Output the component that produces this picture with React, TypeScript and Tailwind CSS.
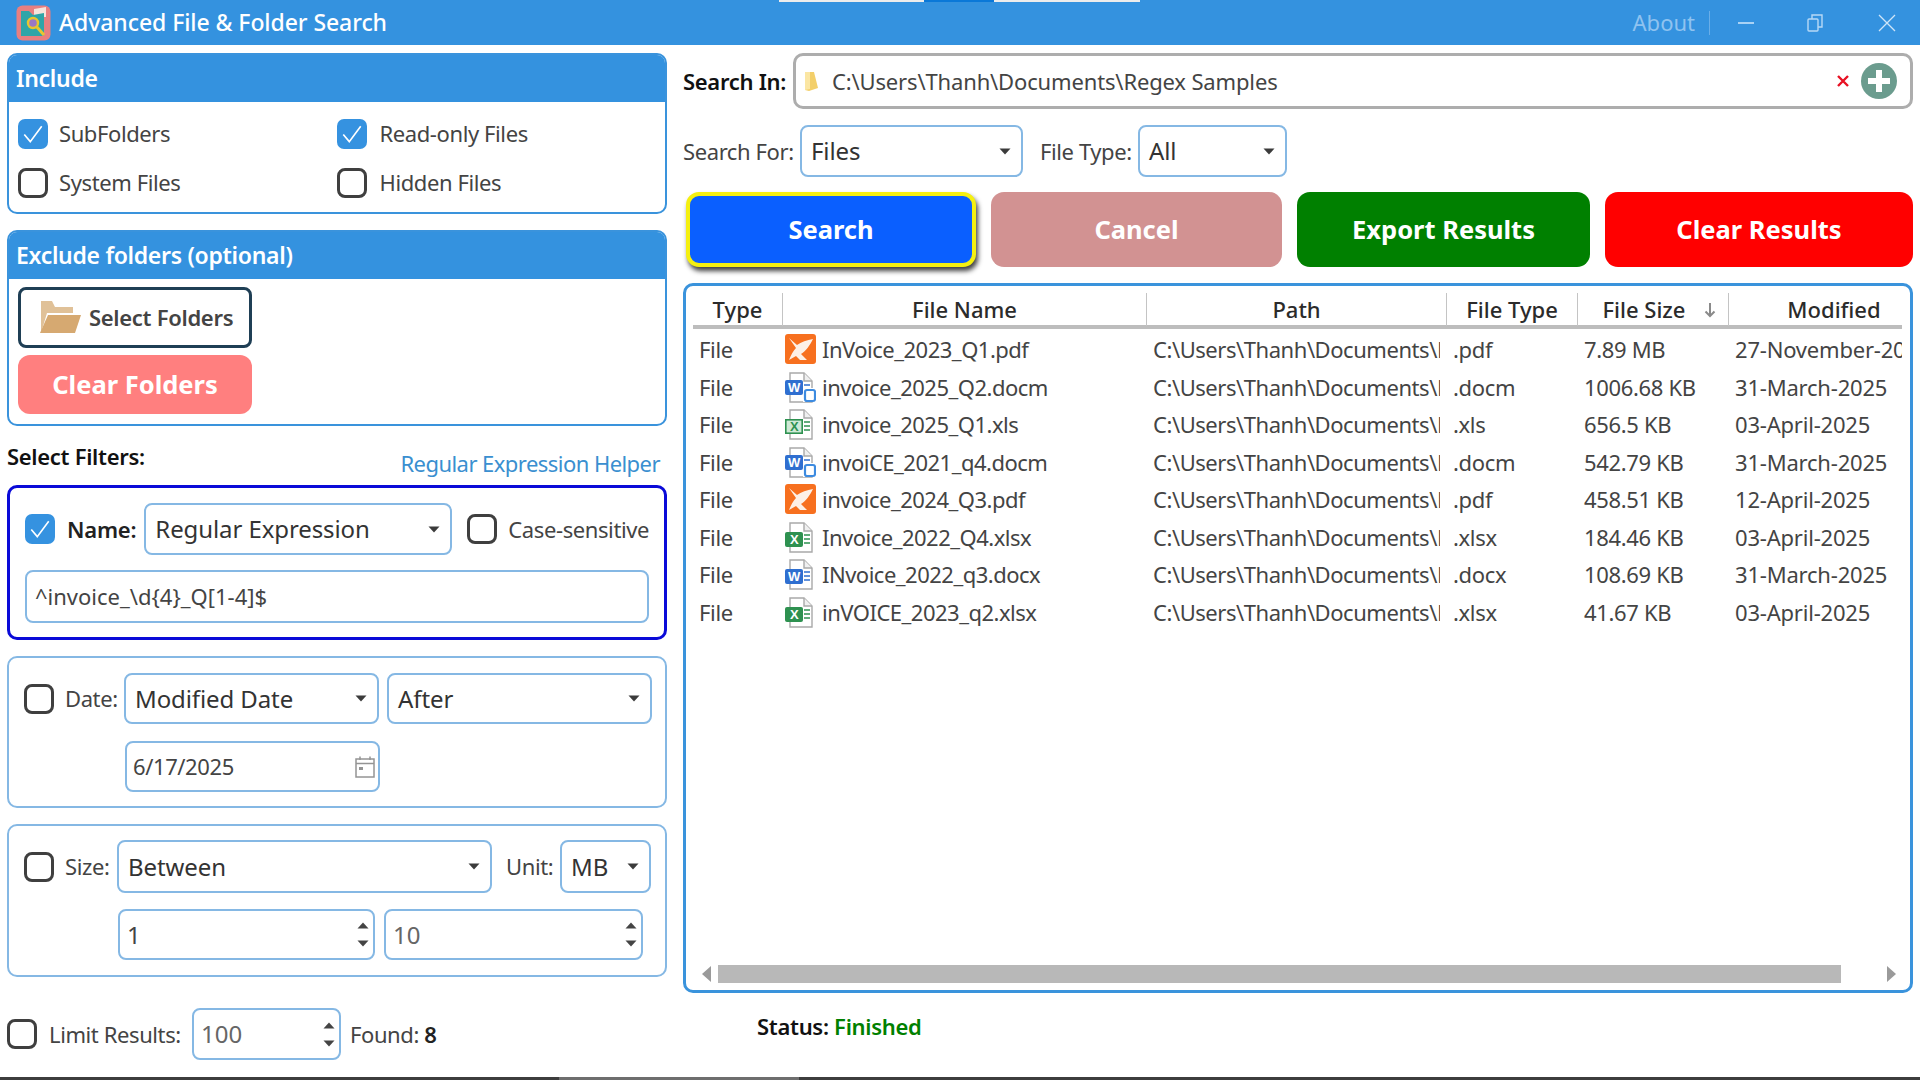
import React from "react";

const FONT = "font-['Noto_Sans','Open_Sans',sans-serif]";

function Check({ checked, className = "" }: { checked?: boolean; className?: string }) {
  if (checked) {
    return (
      <span className={`flex h-[30px] w-[30px] shrink-0 items-center justify-center rounded-[7px] bg-[#3592e0] ${className}`}>
        <svg width="24" height="24" viewBox="0 0 22 22" fill="none">
          <path d="M3 11.5 L8.5 18 L19 4" stroke="#fff" strokeWidth="1.5" />
        </svg>
      </span>
    );
  }
  return <span className={`block h-[30px] w-[30px] shrink-0 rounded-[8px] border-[3px] border-[#3f3f3f] bg-white ${className}`} />;
}

function Caret() {
  return (
    <svg width="12" height="7" viewBox="0 0 12 7" className="shrink-0">
      <path d="M0.5 0.5 H11.5 L6 6.5 Z" fill="#3b3b3b" />
    </svg>
  );
}

function Select({ value, className = "" }: { value: string; className?: string }) {
  return (
    <div className={`flex items-center justify-between rounded-[8px] border-2 border-[#85b8e4] bg-white pl-[9px] pr-[10px] text-[24px] tracking-[-0.1px] text-[#333] ${className}`}>
      <span className="whitespace-nowrap">{value}</span>
      <Caret />
    </div>
  );
}

function Spin({ value, className = "", dim }: { value: string; className?: string; dim?: boolean }) {
  return (
    <div className={`flex items-center justify-between rounded-[8px] border-2 border-[#85b8e4] bg-white pl-[7px] pr-[4px] text-[24px] ${dim ? "text-[#666]" : "text-[#444]"} ${className}`}>
      <span>{value}</span>
      <span className="flex flex-col gap-[11px]">
        <svg width="12" height="7" viewBox="0 0 12 7"><path d="M0.5 6.5 H11.5 L6 0.5 Z" fill="#444" /></svg>
        <svg width="12" height="7" viewBox="0 0 12 7"><path d="M0.5 0.5 H11.5 L6 6.5 Z" fill="#444" /></svg>
      </span>
    </div>
  );
}

function Logo() {
  return (
    <svg width="35" height="36" viewBox="0 0 35 36" className="shrink-0">
      <rect x="0.5" y="0.5" width="34" height="35" rx="6" fill="#e87f80" />
      <path d="M18 4 L30 2 V12 H18 Z" fill="#f6e4dc" />
      <path d="M5 6 H13 L17 10 L28 8 V29 Q28 31 26 31 H5 Z" fill="#2fa5a8" />
      <path d="M20 21 L28 30" stroke="#e9c62f" strokeWidth="3" />
      <circle cx="17" cy="18" r="5" fill="#9a78c6" stroke="#e9c62f" strokeWidth="2.4" />
    </svg>
  );
}

function FolderOpen() {
  return (
    <svg width="44" height="34" viewBox="0 0 44 34" className="shrink-0">
      <path d="M4 0 H15 L18 6 H36 V12 H10 L4 32 Z" fill="#e0c198" />
      <path d="M11 14 H44 L38 32 H3 Z" fill="#d6a971" />
    </svg>
  );
}

function FileIcon({ kind }: { kind: string }) {
  if (kind === "pdf") {
    return (
      <svg width="31" height="31" viewBox="0 0 31 31">
        <rect width="31" height="30" rx="3" fill="#f7701f" />
        <path d="M4 4 L12 11 C16 8 22 6 28 5 C25 11 21 17 16 20 L22 26 L15 26 L11 22 L4 26 C6 21 8 17 11 14 Z" fill="#fdf0e6" />
      </svg>
    );
  }
  const isWord = kind.startsWith("doc");
  const color = isWord ? "#2f6fd0" : "#2e9150";
  const letter = isWord ? "W" : "X";
  const macro = kind === "docm";
  return (
    <svg width="31" height="31" viewBox="0 0 31 31">
      <path d="M5 1 H19 L27 9 V30 H5 Z" fill="#fff" stroke="#a9a9a9" strokeWidth="1.4" />
      <path d="M19 1 V9 H27" fill="#f0f0f0" stroke="#a9a9a9" strokeWidth="1.4" />
      <g stroke={color} strokeWidth="1.6">
        <path d="M19 13 H25 M19 17 H25 M19 21 H25" />
      </g>
      {kind === "xls" ? (
        <rect x="0.8" y="10.8" width="16.4" height="13.4" fill="#cfe9d6" stroke={color} strokeWidth="1.6" />
      ) : (
        <rect y={macro ? 8 : 10} width="18" height="15" rx="2" fill={color} />
      )}
      <text x="9" y={macro ? 20 : 22} textAnchor="middle" fontSize="13" fontWeight="700" fontFamily="Liberation Sans" fill={kind === "xls" ? color : "#fff"}>{letter}</text>
      {macro && (
        <g>
          <rect x="18" y="16" width="13" height="14" fill="#fff" />
          <rect x="20" y="18" width="10" height="11" rx="2" fill="#fff" stroke="#3d8be0" strokeWidth="2.2" />
        </g>
      )}
    </svg>
  );
}

const rows = [
  ["pdf", "InVoice_2023_Q1.pdf", ".pdf", "7.89 MB", "27-November-2025"],
  ["docm", "invoice_2025_Q2.docm", ".docm", "1006.68 KB", "31-March-2025"],
  ["xls", "invoice_2025_Q1.xls", ".xls", "656.5 KB", "03-April-2025"],
  ["docm", "invoiCE_2021_q4.docm", ".docm", "542.79 KB", "31-March-2025"],
  ["pdf", "invoice_2024_Q3.pdf", ".pdf", "458.51 KB", "12-April-2025"],
  ["xlsx", "Invoice_2022_Q4.xlsx", ".xlsx", "184.46 KB", "03-April-2025"],
  ["docx", "INvoice_2022_q3.docx", ".docx", "108.69 KB", "31-March-2025"],
  ["xlsx", "inVOICE_2023_q2.xlsx", ".xlsx", "41.67 KB", "03-April-2025"],
];

const headCell = "flex items-center justify-center border-r border-[#c4c4c4] text-[22px] font-medium text-[#2b2b2b]";
const bodyCell = "overflow-hidden whitespace-nowrap pl-[6px]";
const label = "text-[22px] tracking-[-0.4px] text-[#444] whitespace-nowrap";
const actionBtn = "flex items-center justify-center rounded-[13px] text-[25.5px] font-bold text-white";

export default function App() {
  return (
    <div className={`relative flex h-[1080px] w-[1920px] flex-col overflow-hidden bg-white ${FONT}`}>
      {/* Title bar */}
      <div className="relative flex h-[45px] shrink-0 items-center bg-[#3492df] pl-[16px] pr-[24px]">
        <div className="absolute left-[779px] top-0 flex h-[2px]">
          <span className="w-[145px] bg-[#ececec]" />
          <span className="w-[70px] bg-[#0a78d8]" />
          <span className="w-[146px] bg-[#ececec]" />
        </div>
        <Logo />
        <span className="ml-[8px] text-[23px] font-medium tracking-[-0.07px] text-white">Advanced File &amp; Folder Search</span>
        <span className="ml-auto text-[22px] text-[#8fc3f0]">About</span>
        <span className="ml-[14px] h-[24px] w-px bg-[#6aaee8]" />
        <svg width="16" height="2" className="ml-[28px]"><rect width="16" height="2" fill="#a9d2f5" /></svg>
        <svg width="16" height="18" viewBox="0 0 16 18" fill="none" stroke="#b7d9f6" strokeWidth="1.4" className="ml-[53px]">
          <rect x="1" y="5" width="10" height="12" rx="1" />
          <path d="M5 5 V1 H15 V13 H11" />
        </svg>
        <svg width="18" height="18" viewBox="0 0 18 18" stroke="#cfe5f8" strokeWidth="1.3" className="ml-[55px]">
          <path d="M1 1 L17 17 M17 1 L1 17" />
        </svg>
      </div>

      <div className="flex flex-1 gap-[16px] pl-[7px] pt-[8px]">
        {/* Left column */}
        <div className="flex w-[660px] shrink-0 flex-col">
          <div className="h-[161px] overflow-hidden rounded-[10px] border-2 border-[#3a93dc]">
            <div className="flex h-[47px] items-center bg-[#3492df] pl-[7px] text-[23px] font-semibold tracking-[-0.3px] text-white">Include</div>
            <div className="grid grid-cols-2 gap-y-[16px] pl-[9px] pt-[15px]">
              <div className="flex items-center gap-[11px]"><Check checked /><span className={label}>SubFolders</span></div>
              <div className="ml-[-5px] flex items-center gap-[13px]"><Check checked /><span className={label}>Read-only Files</span></div>
              <div className="flex items-center gap-[11px]"><Check /><span className={label}>System Files</span></div>
              <div className="ml-[-5px] flex items-center gap-[13px]"><Check /><span className={label}>Hidden Files</span></div>
            </div>
          </div>

          <div className="mt-[16px] h-[196px] overflow-hidden rounded-[10px] border-2 border-[#3a93dc]">
            <div className="flex h-[47px] items-center bg-[#3492df] pl-[7px] text-[23px] font-semibold tracking-[-0.3px] text-white">Exclude folders (optional)</div>
            <div className="flex flex-col gap-[7px] pl-[9px] pt-[8px]">
              <div className="flex h-[61px] w-[234px] items-center gap-[8px] rounded-[8px] border-[3px] border-[#1f3f55] bg-white pl-[16px] text-[22px] font-semibold tracking-[-0.3px] text-[#444]">
                <FolderOpen />
                <span>Select Folders</span>
              </div>
              <div className="flex h-[59px] w-[234px] items-center justify-center rounded-[12px] bg-[#ff7f7f] text-[25.5px] font-bold text-white">Clear Folders</div>
            </div>
          </div>

          <div className="flex h-[59px] items-start justify-between pr-[7px] pt-[16px]">
            <span className="text-[22px] font-semibold leading-[28px] tracking-[-0.3px] text-[#111]">Select Filters:</span>
            <span className="mt-[7px] text-[22px] leading-[28px] tracking-[-0.55px] text-[#3a8fd0]">Regular Expression Helper</span>
          </div>

          <div className="flex h-[155px] flex-col gap-[15px] rounded-[10px] border-[3px] border-[#0a0ad8] pl-[15px] pr-[15px] pt-[15px]">
            <div className="flex items-center">
              <Check checked />
              <span className="ml-[12px] w-[78px] text-[22px] font-semibold tracking-[-0.2px] text-[#222]">Name:</span>
              <Select value="Regular Expression" className="h-[52px] w-[308px] shrink-0" />
              <Check className="ml-[15px]" />
              <span className={`ml-[11px] ${label}`}>Case-sensitive</span>
            </div>
            <div className="flex h-[53px] items-center rounded-[8px] border-2 border-[#85b8e4] pl-[8px] text-[22px] text-[#444]">^invoice_\d{"{4}"}_Q[1-4]$</div>
          </div>

          <div className="mt-[16px] flex h-[152px] flex-col gap-[17px] rounded-[10px] border-2 border-[#85b8e4] pl-[15px] pr-[13px] pt-[15px]">
            <div className="flex items-center">
              <Check />
              <span className={`ml-[11px] w-[59px] ${label}`}>Date:</span>
              <Select value="Modified Date" className="h-[51px] w-[255px]" />
              <Select value="After" className="ml-[8px] h-[51px] flex-1" />
            </div>
            <div className="ml-[101px] flex h-[51px] w-[255px] items-center justify-between rounded-[8px] border-2 border-[#85b8e4] pl-[6px] pr-[3px] text-[22px] tracking-[-0.4px] text-[#444]">
              <span>6/17/2025</span>
              <svg width="20" height="22" viewBox="0 0 20 22" fill="none" stroke="#949494" strokeWidth="1.5">
                <rect x="1" y="3" width="18" height="18" />
                <path d="M1 7.5 H19 M5 0.5 V4 M15 0.5 V4" />
                <rect x="4" y="11" width="4" height="3" fill="#949494" stroke="none" />
              </svg>
            </div>
          </div>

          <div className="mt-[16px] flex h-[153px] flex-col gap-[16px] rounded-[10px] border-2 border-[#85b8e4] pl-[15px] pr-[14px] pt-[14px]">
            <div className="flex items-center">
              <Check />
              <span className={`ml-[11px] w-[52px] ${label}`}>Size:</span>
              <Select value="Between" className="h-[53px] w-[375px]" />
              <span className={`ml-[14px] w-[54px] ${label}`}>Unit:</span>
              <Select value="MB" className="h-[53px] flex-1" />
            </div>
            <div className="ml-[94px] flex gap-[9px] pr-[8px]">
              <Spin value="1" className="h-[51px] w-[257px]" />
              <Spin value="10" className="h-[51px] flex-1" dim />
            </div>
          </div>

          <div className="mt-[31px] flex items-center">
            <Check />
            <span className={`ml-[12px] w-[143px] ${label}`}>Limit Results:</span>
            <Spin value="100" className="h-[52px] w-[149px]" dim />
            <span className={`ml-[9px] ${label}`}>Found: <b className="font-semibold text-[#222]">8</b></span>
          </div>
        </div>

        {/* Right column */}
        <div className="flex w-[1230px] shrink-0 flex-col">
          <div className="flex h-[56px] items-center">
            <span className="w-[110px] text-[22px] font-semibold tracking-[-0.3px] text-[#111]">Search In:</span>
            <div className="flex h-[56px] flex-1 items-center rounded-[10px] border-[3px] border-[#adadad] pl-[9px] pr-[13px]">
              <svg width="15" height="20" viewBox="0 0 15 20" className="shrink-0">
                <path d="M0 1 H9 L13 17 L4 20 L0 19 Z" fill="#f3cf6a" />
                <path d="M0 1 H5 V18 L0 19 Z" fill="#fbe6a3" />
              </svg>
              <span className="ml-[12px] text-[22px] tracking-[-0.15px] text-[#444]">C:\Users\Thanh\Documents\Regex Samples</span>
              <svg width="14" height="14" viewBox="0 0 14 14" stroke="#e81123" strokeWidth="2.4" className="ml-auto">
                <path d="M2 2 L12 12 M12 2 L2 12" />
              </svg>
              <svg width="36" height="36" viewBox="0 0 36 36" className="ml-[11px]">
                <circle cx="18" cy="18" r="18" fill="#6b9c8e" />
                <path d="M18 7 V29 M7 18 H29" stroke="#fff" strokeWidth="6" />
              </svg>
            </div>
          </div>

          <div className="mt-[16px] flex h-[52px] items-center">
            <span className={`w-[117px] ${label}`}>Search For:</span>
            <Select value="Files" className="h-[52px] w-[223px]" />
            <span className={`ml-[17px] w-[98px] ${label}`}>File Type:</span>
            <Select value="All" className="h-[52px] w-[149px]" />
          </div>

          <div className="mt-[15px] flex h-[75px] items-stretch gap-[15px] pl-[3px]">
            <div className={`${actionBtn} w-[290px] border-[4px] border-[#f5f010] bg-[#0a5fff] shadow-[2px_4px_5px_rgba(0,0,0,0.75)]`}>Search</div>
            <div className={`${actionBtn} w-[291px] bg-[#d29292]`}>Cancel</div>
            <div className={`${actionBtn} w-[293px] bg-[#008000]`}>Export Results</div>
            <div className={`${actionBtn} w-[308px] bg-[#ff0000]`}>Clear Results</div>
          </div>

          {/* Results */}
          <div className="mt-[16px] flex h-[710px] flex-col rounded-[10px] border-[3px] border-[#3a93dc] pl-[7px] pr-[8px] pt-[7px]">
            <div className="overflow-hidden">
              <div className="grid h-[36px] grid-cols-[90px_364px_300px_131px_151px_210px] border-b-[4px] border-[#bdbdbd]">
                <div className={headCell}>Type</div>
                <div className={headCell}>File Name</div>
                <div className={headCell}>Path</div>
                <div className={headCell}>File Type</div>
                <div className={`${headCell} gap-[18px] pl-[12px]`}>
                  <span>File Size</span>
                  <svg width="12" height="16" viewBox="0 0 12 16" fill="none" stroke="#8a8a8a" strokeWidth="2"><path d="M6 1 V14 M1.5 9.5 L6 14 L10.5 9.5" /></svg>
                </div>
                <div className={`${headCell} border-r-0`}>Modified</div>
              </div>
              <div className="pt-[2px] text-[22px] tracking-[-0.33px] text-[#444]">
                {rows.map((r, i) => (
                  <div key={i} className="grid h-[37.5px] grid-cols-[90px_364px_300px_131px_151px_210px] items-center">
                    <div className={bodyCell}>File</div>
                    <div className="flex items-center gap-[6px] overflow-hidden pl-[2px] tracking-[-0.5px]">
                      <FileIcon kind={r[0]} />
                      <span>{r[1]}</span>
                    </div>
                    <div className="pl-[6px] tracking-[-0.45px]">
                      <div className="w-[287px] overflow-hidden whitespace-nowrap">C:\Users\Thanh\Documents\Regex Samples</div>
                    </div>
                    <div className={bodyCell}>{r[2]}</div>
                    <div className={bodyCell}>{r[3]}</div>
                    <div className={`${bodyCell} tracking-[-0.2px]`}>{r[4]}</div>
                  </div>
                ))}
              </div>
            </div>
            <div className="mb-[7px] mt-auto flex h-[18px] items-center">
              <svg width="12" height="18" viewBox="0 0 12 18" className="ml-[7px] shrink-0"><path d="M11 1 V17 L2 9 Z" fill="#9a9a9a" /></svg>
              <div className="ml-[6px] h-[18px] w-[1123px] bg-[#b8b8b8]" />
              <svg width="12" height="18" viewBox="0 0 12 18" className="ml-[45px] shrink-0"><path d="M1 1 V17 L10 9 Z" fill="#9a9a9a" /></svg>
            </div>
          </div>

          <div className="mt-[17px] pl-[74px] text-[22px] font-semibold tracking-[-0.3px] text-[#111]">
            Status: <span className="text-[#008000]">Finished</span>
          </div>
        </div>
      </div>

      <div className="absolute bottom-0 left-0 right-0 flex h-[3px] bg-[#3d3d3d]">
        <span className="ml-[559px] w-[240px] bg-[#6e6e6e]" />
      </div>
    </div>
  );
}
